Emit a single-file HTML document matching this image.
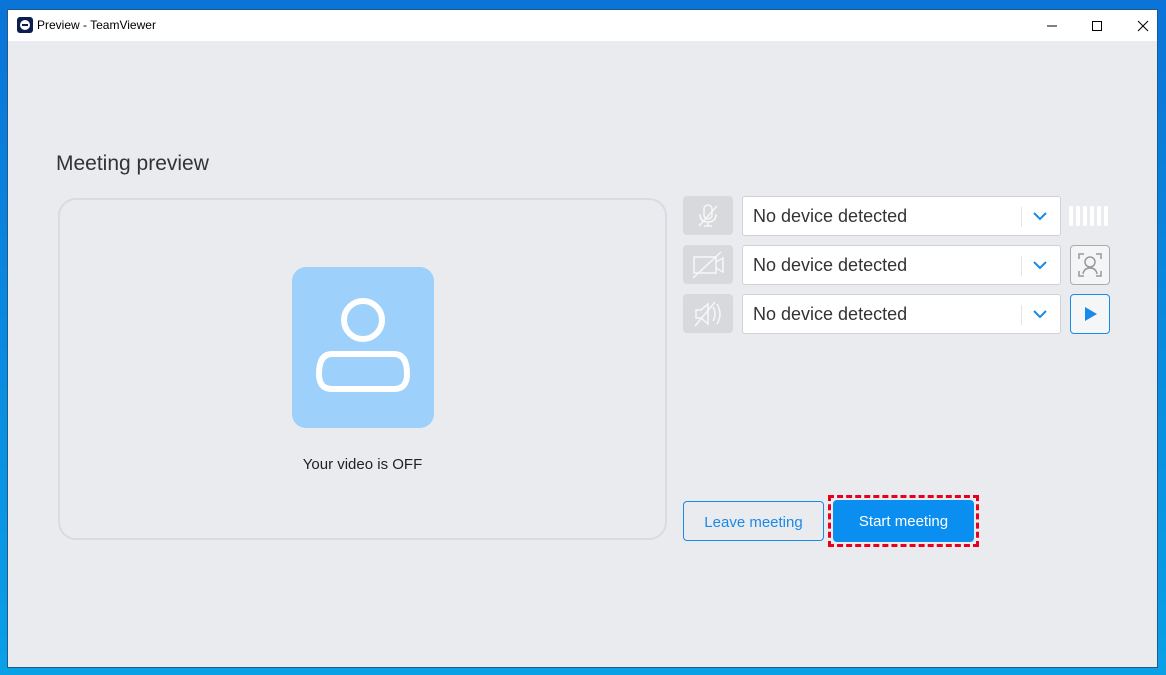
<!DOCTYPE html>
<html><head><style>
*{margin:0;padding:0;box-sizing:border-box}
body{width:1166px;height:675px;overflow:hidden;background:linear-gradient(180deg,#0a74d8,#0aa0e6);font-family:"Liberation Sans",sans-serif;position:relative}
.win{position:absolute;left:7px;top:9px;width:1151px;height:659px;background:#e9ebef;border:1px solid #1f5a8a}
.in{position:absolute;left:-1px;top:0;width:100%;height:100%}
.title{position:absolute;left:0;top:0;width:100%;height:31px;background:#fff}
.title .t{position:absolute;left:29px;top:8px;font-size:12px;color:#000}
.logo{position:absolute;left:9px;top:7px;width:16px;height:16px;background:#0e1f4f;border-radius:3px}
.logo i{position:absolute;left:3px;top:3px;width:10px;height:10px;border-radius:50%;background:#fff}
.logo i:after{content:"";position:absolute;left:2px;top:4px;width:6px;height:2px;background:#0e1f4f}
h1{position:absolute;left:49px;top:142px;font-size:21px;font-weight:normal;color:#333}
.vid{position:absolute;left:51px;top:188px;width:609px;height:342px;border:2px solid #d8dbe0;border-radius:18px}
.av{position:absolute;left:232px;top:67px;width:142px;height:161px;background:#9dd1fb;border-radius:14px}
.vt{position:absolute;left:0;width:100%;top:256px;text-align:center;font-size:15px;color:#222}
.ib{position:absolute;left:676px;width:50px;height:39px;background:#d8d9dc;border-radius:4px}
.sel{position:absolute;left:735px;width:319px;height:40px;background:#fff;border:1px solid #cfd2d6;border-radius:3px;font-size:18px;color:#333;padding:9px 0 0 10px}
.sel .d{position:absolute;right:38px;top:10px;width:1px;height:20px;background:#e3e5e8}
.sel svg{position:absolute;right:12px;top:14px}
.btn{position:absolute;top:491px;height:40px;border-radius:4px;font-size:15px;text-align:center;line-height:42px}
</style></head><body>
<div class="win">
<div class="title"><div class="logo"><i></i></div><div class="t">Preview - TeamViewer</div>
<svg style="position:absolute;left:1032px;top:8px" width="120" height="16"><path d="M7 8h10" stroke="#000"/><rect x="52.5" y="3.5" width="9" height="9" fill="none" stroke="#000"/><path d="M98 3l10 10M108 3l-10 10" stroke="#000"/></svg>
</div>
<div class="in">
<h1>Meeting preview</h1>
<div class="vid"><div class="av"><svg width="142" height="161"><circle cx="71" cy="53" r="19" fill="none" stroke="#fff" stroke-width="6"/><path d="M40 87h62q13 0 13 20v0q0 15 -13 15h-62q-13 0 -13-15q0-20 13-20z" fill="none" stroke="#fff" stroke-width="6"/></svg></div><div class="vt">Your video is OFF</div></div>
<div class="ib" style="top:186px"><svg width="50" height="39" opacity=".8"><rect x="21" y="9" width="8" height="14" rx="4" fill="none" stroke="#fff" stroke-width="1.5"/><path d="M17 18q0 8 8 8q8 0 8-8M25 26v4M21 30h8M16 30l18-20" fill="none" stroke="#fff" stroke-width="1.5"/></svg></div>
<div class="ib" style="top:235px"><svg width="50" height="39" opacity=".8"><rect x="11" y="12" width="22" height="16" fill="none" stroke="#fff" stroke-width="1.5"/><path d="M33 17l7-4v14l-7-4M10 33l28-26" fill="none" stroke="#fff" stroke-width="1.5"/></svg></div>
<div class="ib" style="top:284px"><svg width="50" height="39" opacity=".8"><path d="M13 16h5l7-6v20l-7-6h-5zM30 13q4 7 0 14M34 10q6 10 0 20M12 32l20-24" fill="none" stroke="#fff" stroke-width="1.5"/></svg></div>
<div class="sel" style="top:186px">No device detected<div class="d"></div><svg width="16" height="10"><path d="M2 2l6 6 6-6" fill="none" stroke="#1a8ae8" stroke-width="2"/></svg></div>
<div class="sel" style="top:235px">No device detected<div class="d"></div><svg width="16" height="10"><path d="M2 2l6 6 6-6" fill="none" stroke="#1a8ae8" stroke-width="2"/></svg></div>
<div class="sel" style="top:284px">No device detected<div class="d"></div><svg width="16" height="10"><path d="M2 2l6 6 6-6" fill="none" stroke="#1a8ae8" stroke-width="2"/></svg></div>
<svg style="position:absolute;left:1062px;top:196px" width="42" height="20"><g fill="#fff"><rect x="0" y="0" width="4" height="20" rx="1"/><rect x="7" y="0" width="4" height="20" rx="1"/><rect x="14" y="0" width="4" height="20" rx="1"/><rect x="21" y="0" width="4" height="20" rx="1"/><rect x="28" y="0" width="4" height="20" rx="1"/><rect x="35" y="0" width="4" height="20" rx="1"/></g></svg>
<div style="position:absolute;left:1063px;top:235px;width:40px;height:40px;border:1px solid #a9abad;border-radius:4px;background:#f4f5f6"><svg width="38" height="38"><path d="M8 13V8h5M25 8h5v5M30 25v5h-5M13 30H8v-5" fill="none" stroke="#999" stroke-width="1.5"/><circle cx="19" cy="16" r="5" fill="none" stroke="#999" stroke-width="1.5"/><path d="M12 28q1-6 7-6q6 0 7 6" fill="none" stroke="#999" stroke-width="1.5"/></svg></div>
<div style="position:absolute;left:1063px;top:284px;width:40px;height:40px;border:1px solid #1a8ae8;border-radius:4px;background:#f4f6f8"><svg width="38" height="38"><path d="M14 12l12 7-12 7z" fill="#1a8ae8"/></svg></div>
<div class="btn" style="left:676px;width:141px;border:1px solid #1a8ae8;color:#1a8ae8">Leave meeting</div>
<div style="position:absolute;left:821px;top:485px;width:151px;height:52px;border:3px dashed #e8001c"></div>
<div class="btn" style="left:826px;width:141px;background:#0a8ef0;color:#fff;top:490px;height:42px;line-height:44px">Start meeting</div>
</div>
</div>
</body></html>
